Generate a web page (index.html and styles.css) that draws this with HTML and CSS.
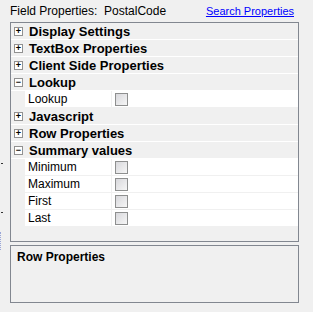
FILE: index.html
```html
<!DOCTYPE html>
<html lang="en">
<head>
    <meta charset="UTF-8">
    <title>Field Properties</title>
    <link rel="stylesheet" href="styles.css">
</head>
<body>
    <div class="topbar">
        <span>Field Properties:&nbsp; PostalCode</span>
        <a href="#" class="search">Search Properties</a>
    </div>

    <div class="grid">
        <div class="cat"><span class="exp">+</span>Display Settings</div>
        <div class="cat"><span class="exp">+</span>TextBox Properties</div>
        <div class="cat"><span class="exp">+</span>Client Side Properties</div>
        <div class="cat"><span class="exp">&minus;</span>Lookup</div>
        <div class="prop"><span class="name">Lookup</span><span class="val"><span class="check"></span></span></div>
        <div class="cat"><span class="exp">+</span>Javascript</div>
        <div class="cat"><span class="exp">+</span>Row Properties</div>
        <div class="cat"><span class="exp">&minus;</span>Summary values</div>
        <div class="prop"><span class="name">Minimum</span><span class="val"><span class="check"></span></span></div>
        <div class="prop"><span class="name">Maximum</span><span class="val"><span class="check"></span></span></div>
        <div class="prop"><span class="name">First</span><span class="val"><span class="check"></span></span></div>
        <div class="prop"><span class="name">Last</span><span class="val"><span class="check"></span></span></div>
    </div>

    <div class="desc">Row Properties</div>

    <!-- bits of the neighbouring control peeking in on the left -->
    <div class="dot dot-a"></div>
    <div class="dot dot-b"></div>
    <div class="edge"></div>
</body>
</html>
```

FILE: styles.css
```css
body {
    margin: 0;
    width: 313px;
    height: 312px;
    background-color: #f0f0f0;
    font-family: "Liberation Sans", Arial, sans-serif;
    font-size: 12px;
    color: #000;
    position: relative;
    overflow: hidden;
}

.topbar {
    height: 22px;
    display: flex;
    justify-content: space-between;
    align-items: center;
    padding: 0 19px 0 10px;
    box-sizing: border-box;
}

.search {
    color: #0000ff;
    text-decoration: underline;
    font-size: 11px;
}

.grid {
    margin-left: 10px;
    width: 289px;
    height: 220px;
    box-sizing: border-box;
    border: 1px solid #828790;
    background-color: #f0f0f0;
}

.cat {
    height: 16px;
    border-bottom: 1px solid #fff;
    display: flex;
    align-items: center;
    font-weight: bold;
    font-size: 13px;
}

.exp {
    width: 7px;
    height: 7px;
    border: 1px solid #919191;
    background-color: #fff;
    margin: 0 6px 0 3px;
    font-size: 9px;
    font-weight: bold;
    line-height: 7px;
    text-align: center;
    color: #000;
}

.prop {
    height: 16px;
    border-bottom: 1px solid #f0f0f0;
    display: flex;
    margin-left: 14px;
}

.name {
    width: 83px;
    padding-left: 3px;
    background-color: #fff;
    border-right: 1px solid #f0f0f0;
    line-height: 16px;
}

.val {
    flex: 1;
    background-color: #fff;
    display: flex;
    align-items: center;
    padding-left: 3px;
}

.check {
    width: 11px;
    height: 11px;
    border: 1px solid #8e8f8f;
    background: linear-gradient(135deg, #d8d8dc, #f6f6f6);
}

.desc {
    margin: 3px 0 0 10px;
    width: 289px;
    height: 58px;
    box-sizing: border-box;
    border: 1px solid #828790;
    padding: 4px 6px;
    font-weight: bold;
    font-size: 12px;
}

.dot {
    position: absolute;
    left: 1px;
    width: 2px;
    height: 1px;
    background-color: #333;
}

.dot-a {
    top: 163px;
}

.dot-b {
    top: 212px;
}

.edge {
    position: absolute;
    left: 0;
    top: 232px;
    width: 2px;
    height: 18px;
    border-left: 1px dotted #9aa6d8;
}
```
